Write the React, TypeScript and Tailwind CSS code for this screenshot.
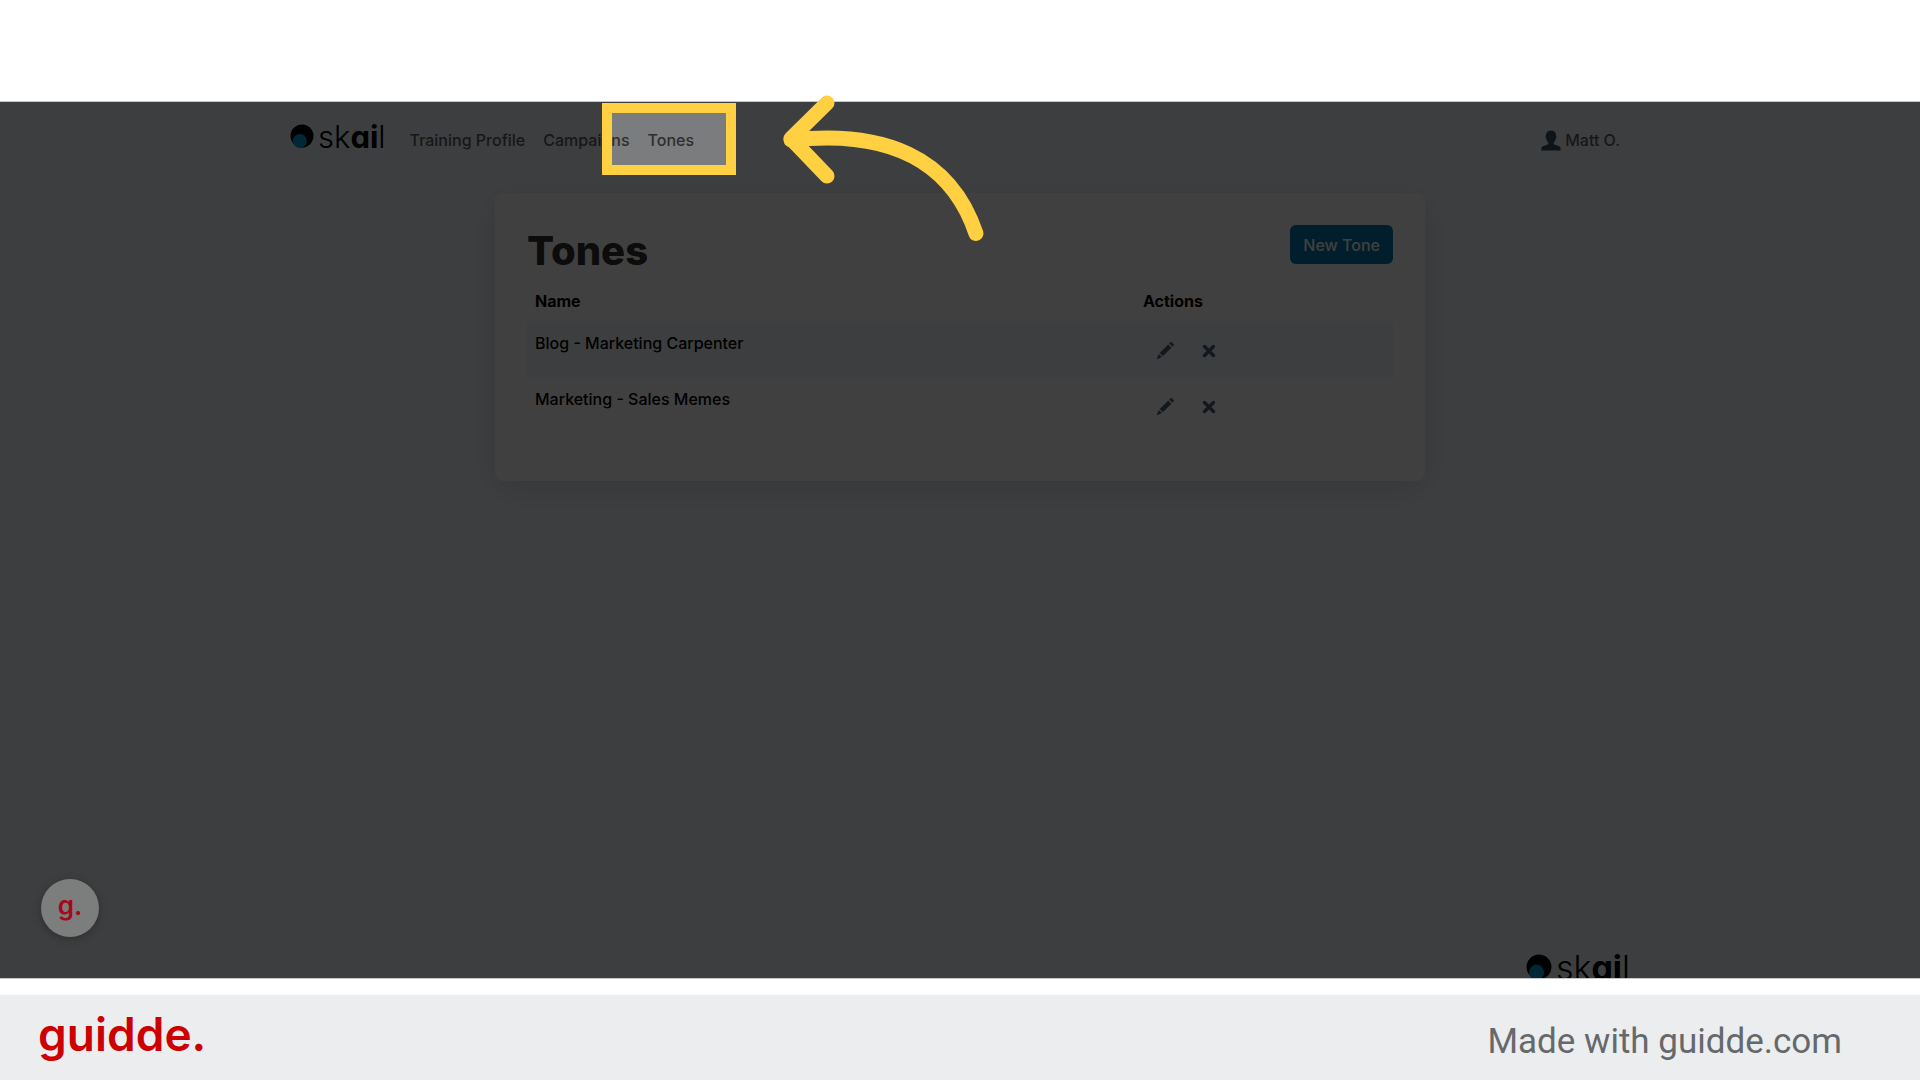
import type { ReactNode } from 'react';

interface Tone {
  id: string;
  name: string;
}

const tones: Tone[] = [
  { id: 'blog', name: 'Blog - Marketing Carpenter' },
  { id: 'memes', name: 'Marketing - Sales Memes' },
];

const navItems = ['Training Profile', 'Campaigns', 'Tones'];

function SkailLogo({ large = false }: { large?: boolean }) {
  return (
    <a href="#" className="flex items-start text-black" aria-label="skail">
      <svg viewBox="0 0 24 24" className={large ? 'size-[26px]' : 'size-6'} aria-hidden="true">
        <circle cx="12" cy="12" r="11.5" fill="#000" />
        <circle cx="9.8" cy="17" r="7" fill="#00A0D8" />
      </svg>
      <span
        className={
          large
            ? 'ml-1 text-[34px] leading-7 font-light [font-feature-settings:"cv11"]'
            : 'ml-1 text-[31px] leading-[26px] font-light [font-feature-settings:"cv11"]'
        }
      >
        sk<span className="font-bold">ai</span>l
      </span>
    </a>
  );
}

function PencilIcon() {
  return (
    <svg viewBox="0 0 18 18" className="size-[18px]" fill="currentColor" aria-hidden="true">
      <path d="M13.2 1.6 14.4.5a1.2 1.2 0 0 1 1.7 0l1.4 1.4a1.2 1.2 0 0 1 0 1.700l-1.200 1.200z" />
      <path d="m12.300 2.600 3.100 3.100-8.600 8.500-3.100-3.100z" />
      <path d="m2.800 12 3.100 3.100L.5 17.500z" />
    </svg>
  );
}

function CloseIcon() {
  return (
    <svg viewBox="0 0 14 14" className="size-3.5" aria-hidden="true">
      <path d="m2.500 2.500 9 9m0-9-9 9" stroke="currentColor" strokeWidth="3.4" strokeLinecap="round" />
    </svg>
  );
}

function UserIcon() {
  return (
    <svg viewBox="0 0 20 21" className="h-[21px] w-5" fill="currentColor" aria-hidden="true">
      <path d="M10 .5c3 0 5 1.700 5 4.600 0 1 .4 1.500.4 2.300s-.5 1.200-.8 1.600c-.4 1.800-1.100 3-1.900 3.700v1.500c1.400 1 4.100 1.200 5.600 2.100 1 .6 1.300 1.500 1.300 2.700v1.500H.4V19c0-1.200.3-2.100 1.300-2.700 1.500-.9 4.200-1.100 5.600-2.100v-1.500C6.500 12 5.800 10.800 5.400 9c-.3-.4-.8-.8-.8-1.600S5 6.100 5 5.100C5 2.200 7 .5 10 .5z" />
    </svg>
  );
}

function ActionButton({ label, children }: { label: string; children: ReactNode }) {
  return (
    <button type="button" aria-label={label} className="flex size-11 items-center justify-center text-[#4a6078]">
      {children}
    </button>
  );
}

function Highlight() {
  return (
    <>
      <div className="pointer-events-none absolute top-[11px] left-[612px] h-[52px] w-[114px] bg-black/50 shadow-[0_0_0_9999px_rgb(0_0_0/0.75)]" />
      <div className="pointer-events-none absolute top-px left-[602px] h-[72px] w-[134px] border-10 border-[#FFD042]" />
    </>
  );
}

function Arrow() {
  return (
    <svg
      viewBox="0 0 204 150"
      className="pointer-events-none absolute -top-[8px] left-[782px] z-10 h-[150px] w-[204px]"
      fill="none"
      stroke="#FFD042"
      strokeWidth="15"
      strokeLinecap="round"
      strokeLinejoin="round"
      aria-hidden="true"
    >
      <path d="M45 9 9 44.500 45 82" />
      <path d="M9 46C101 36 168 62 194 139.500" />
    </svg>
  );
}

export default function App() {
  return (
    <div className="flex min-h-screen flex-col bg-white font-['Inter',sans-serif]">
      <div className="h-[101px]" />

      <div className="relative flex flex-1 flex-col border-y border-[#c4c6c8]">
        <main className="relative flex flex-1 flex-col overflow-hidden bg-[#f4f8fc]">
          <nav className="mx-auto flex w-full max-w-[1340px] items-start pt-[22px]">
            <SkailLogo />
            <ul className="mt-1 ml-6 flex gap-[18px] text-[16px] leading-6 font-medium text-[#5c5d5e]">
              {navItems.map((item) => (
                <li key={item}>
                  <a href="#">{item}</a>
                </li>
              ))}
            </ul>
            <a
              href="#"
              className="mt-1 mr-2.5 ml-auto flex items-center gap-1 text-[16px] leading-6 font-medium text-[#5c5d5e]"
            >
              <span className="text-[#3c5064]">
                <UserIcon />
              </span>
              Matt O.
            </a>
          </nav>

          <section className="mx-auto mt-[41px] w-[930px] max-w-full rounded-lg bg-white px-8 pt-8 pb-12 shadow-[0_8px_32px_rgb(0_0_0/0.12)]">
            <div className="flex items-start justify-between">
              <h1 className="mt-1 text-[40px] leading-[44px] font-extrabold text-[#303030]">Tones</h1>
              <button
                type="button"
                className="h-[39px] rounded-md bg-[#0078ac] px-[13px] text-[16px] font-medium text-white"
              >
                New Tone
              </button>
            </div>
            <table className="mt-2 w-full text-left text-[16px] leading-6 text-black">
              <thead>
                <tr className="h-10">
                  <th className="pl-2 font-bold">Name</th>
                  <th className="w-[258px] pl-2 font-bold">Actions</th>
                </tr>
              </thead>
              <tbody>
                {tones.map((tone) => (
                  <tr key={tone.id} className="h-14 align-top odd:bg-[#f4f8fc]">
                    <td className="pt-2.5 pl-2 font-medium">{tone.name}</td>
                    <td className="pt-2 pl-2">
                      <div className="flex">
                        <ActionButton label="Edit">
                          <PencilIcon />
                        </ActionButton>
                        <ActionButton label="Delete">
                          <CloseIcon />
                        </ActionButton>
                      </div>
                    </td>
                  </tr>
                ))}
              </tbody>
            </table>
          </section>

          <footer className="mx-auto mt-auto flex h-6 w-full max-w-[1340px] justify-end">
            <SkailLogo large />
          </footer>

          <Highlight />
          <button
            type="button"
            className="absolute bottom-[41px] left-[41px] flex size-[58px] items-center justify-center rounded-full bg-[#7c7e7e] pb-1 text-[26px] leading-8 font-semibold text-[#a3081c] shadow-[0_2px_8px_rgb(0_0_0/0.25)]"
          >
            g.
          </button>
        </main>
        <Arrow />
      </div>

      <div className="h-4" />
      <footer className="flex h-[85px] items-center justify-between bg-[#ecedef] pr-[78px] pl-[38px]">
        <a href="#" className="pb-2 text-[46px] leading-[60px] font-semibold text-[#cc0000]">
          guidde.
        </a>
        <p className="pt-2 font-['Roboto',sans-serif] text-[35px] leading-10 text-[#66696b]">
          Made with guidde.com
        </p>
      </footer>
    </div>
  );
}
